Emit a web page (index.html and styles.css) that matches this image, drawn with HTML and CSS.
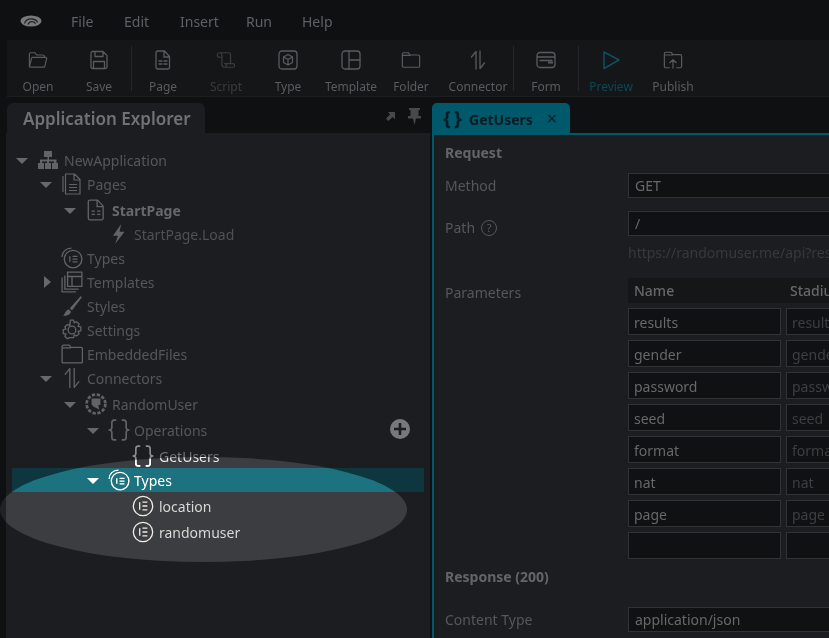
FILE: index.html
```html
<!DOCTYPE html>
<html lang="en">
<head>
<meta charset="utf-8">
<title>Application Explorer</title>
<link rel="stylesheet" href="styles.css">
</head>
<body>
<div class="app">
  <header class="menubar">
    <svg class="logo" width="22" height="12" viewBox="0 0 22 12"><ellipse cx="11" cy="6" rx="10.500" ry="5.500" fill="#77797b"/><path d="M4.500 8.500c1-3 4-4.800 7.500-4.500 3 .3 5 1.700 5.500 3.500M8 9.500c.8-2 2.500-3 4.500-2.800 1.500.2 2.500 1 3 2" fill="none" stroke="#232527" stroke-width="1.300"/></svg>
    <nav class="menu"><span>File</span><span>Edit</span><span>Insert</span><span>Run</span><span>Help</span></nav>
  </header>
  <div class="toolbar">
    <div class="tool t-open"><svg viewBox="0 0 22 20"><path d="M1.500 17V3.500a1.500 1.500 0 0 1 1.500-1.500h4.500l2 2.500h7a1.500 1.500 0 0 1 1.500 1.500v1M1.500 17.500l2.500-9.500a1 1 0 0 1 1-.8h14.500a1 1 0 0 1 1 1.300L18.500 17a1 1 0 0 1-1 .8H2.500"/></svg><span>Open</span></div>
    <div class="tool t-save"><svg viewBox="0 0 20 20"><path d="M3 1.500h11l4 4V17a1.500 1.500 0 0 1-1.500 1.500h-13A1.500 1.500 0 0 1 2 17V3a1.500 1.500 0 0 1 1-1.500zM6 1.500V6.500h8V1.500M4.500 18.500V11.500h11v7"/></svg><span>Save</span></div>
    <i class="sep sep1"></i>
    <div class="tool t-page"><svg viewBox="0 0 20 20"><path d="M4.500 1h7l5 5.500V17.500a1.500 1.500 0 0 1-1.500 1.500H4.500A1.500 1.500 0 0 1 3 17.500v-15A1.500 1.500 0 0 1 4.500 1zM11 1v6h5.500M6 11h3M11 11h3M6 14h3M11 14h3"/></svg><span>Page</span></div>
    <div class="tool t-script dim"><svg viewBox="0 0 22 20"><path d="M4 2h10a2 2 0 0 1 2 2v10M4 2a2.500 2.500 0 0 0-2.500 2.500C1.500 6 2.500 7 4 7h2M4 2a2.500 2.500 0 0 1 2.500 2.500V15a3 3 0 0 0 3 3h9a2 2 0 0 0 0-4H9.500a2 2 0 0 1 0 4"/></svg><span>Script</span></div>
    <div class="tool t-type"><svg viewBox="0 0 20 20"><rect x="1" y="1" width="18" height="18" rx="3"/><path d="M10 4.500l4.500 2.500v5.500L10 15l-4.500-2.500V7zM5.500 7L10 9.500 14.500 7M10 9.500V15"/></svg><span>Type</span></div>
    <div class="tool t-template"><svg viewBox="0 0 20 20"><rect x="1" y="1" width="18" height="18" rx="3"/><path d="M8 1v18M8 10h11"/></svg><span>Template</span></div>
    <div class="tool t-folder"><svg viewBox="0 0 22 20"><path d="M1.500 16.500v-13A1.500 1.500 0 0 1 3 2h5l2 2.500h9A1.500 1.500 0 0 1 20.500 6v10.500A1.500 1.500 0 0 1 19 18H3a1.500 1.500 0 0 1-1.500-1.500zM1.500 5h8.500"/></svg><span>Folder</span></div>
    <div class="tool t-connector"><svg viewBox="0 0 20 20"><path d="M8 19V1.500L3.500 7M12 1v17.500L16.500 13"/></svg><span>Connector</span></div>
    <i class="sep sep2"></i>
    <div class="tool t-form"><svg viewBox="0 0 20 20"><rect x="1" y="2.500" width="18" height="15" rx="3"/><path d="M1.500 7h17M4 10.500h12"/><rect class="solid" x="12" y="11.500" width="5" height="2"/></svg><span>Form</span></div>
    <i class="sep sep3"></i>
    <div class="tool t-preview accent"><svg viewBox="0 0 20 20"><path d="M3 2l15 8-15 8.500z"/></svg><span>Preview</span></div>
    <div class="tool t-publish"><svg viewBox="0 0 22 20"><path d="M7 18.500H3A1.500 1.500 0 0 1 1.500 17V3A1.500 1.500 0 0 1 3 1.500h6l2 2.500h8A1.500 1.500 0 0 1 20.500 5.500V17a1.500 1.500 0 0 1-1.500 1.500h-4M1.500 4.500h9M11 19V10M7.500 13L11 9.500l3.500 3.500"/></svg><span>Publish</span></div>
  </div>
  <div class="workspace">
    <aside class="explorer">
      <div class="panel-head">
        <div class="panel-tab">Application Explorer</div>
        <div class="panel-tools">
          <svg width="9" height="9" viewBox="0 0 10 10"><path d="M2 0h8v8L7.500 5.500 2.500 10 0 7.500l4.500-5z" fill="#48494b"/></svg>
          <svg width="13" height="17" viewBox="0 0 13 17"><path d="M1 0h11v2h-1.500v6H13v2.500H8L6.500 17 5 10.500H0V8h2.500V2H1z" fill="#47494b"/></svg>
        </div>
      </div>
      <div class="tree">
        <div class="row l0"><i class="arrow"></i><svg class="ic" viewBox="0 0 22 20"><path class="fill" d="M7 1h8v6h-3v2.500h7.500V13H21v6h-6v-6h2V11.500h-5V13h2v6H8v-6h2v-1.500H5V13h2v6H1v-6h2V9.500h7.500V7H7z"/></svg><span>NewApplication</span></div>
        <div class="row l1"><i class="arrow"></i><svg class="ic" viewBox="0 0 20 22"><path d="M3.500 20.500V1.500M1 19V3M3.500 1h9l5.500 5.500v14.500H3.500zM12 1v6h6M7 11.500h8M7 14.500h8M7 17.500h8"/></svg><span>Pages</span></div>
        <div class="row l2 gap start"><i class="arrow"></i><svg class="ic" viewBox="0 0 20 20"><path d="M4.500 1h7l5 5.500V17.500a1.500 1.500 0 0 1-1.500 1.500H4.500A1.500 1.500 0 0 1 3 17.500v-15A1.500 1.500 0 0 1 4.500 1zM11 1v6h5.500M6 11h3M11 11h3M6 14h3M11 14h3"/></svg><span>StartPage</span></div>
        <div class="row l3 load"><i class="noarrow"></i><svg class="ic" viewBox="0 0 20 20"><path class="fill" d="M12 1L4.500 11.500H9L6.500 19 15 8h-4.500z"/></svg><span>StartPage.Load</span></div>
        <div class="row l1"><i class="noarrow"></i><svg class="ic" viewBox="0 0 20 20"><path d="M1 9C1 4.500 4.500 1 9.500 1"/><circle cx="11" cy="11" r="8"/><path d="M8 8.500v5M10.500 8.500h4.500M10.500 11h4.500M10.500 13.500h4.500"/></svg><span>Types</span></div>
        <div class="row l1"><i class="arrow closed"></i><svg class="ic" viewBox="0 0 20 20"><path d="M1 6v13h12.500M3.500 4v12.500H16"/><rect x="6" y="1" width="13" height="13"/><path d="M6 5h13M10 5v9"/></svg><span>Templates</span></div>
        <div class="row l1"><i class="noarrow"></i><svg class="ic" viewBox="0 0 20 20"><path class="fill" d="M18 1l1 1-9 12-2-2zM7 13l2 2c0 2-2 4-7 4 1.500-1.500 1.500-4.500 5-6z"/></svg><span>Styles</span></div>
        <div class="row l1"><i class="noarrow"></i><svg class="ic" viewBox="0 0 20 20"><circle cx="10" cy="10" r="3.500"/><path d="M8.500 1h3l.5 2.500 2-1 2.500 2-1 2.200 2.500.5v3.500l-2.500.5 1 2.200-2.500 2-2-1-.5 2.600h-3L8 16.900l-2 1-2.500-2 1-2.200-2.500-.5V9.700l2.500-.5-1-2.200 2.500-2 2 1z"/></svg><span>Settings</span></div>
        <div class="row l1"><i class="noarrow"></i><svg class="ic" viewBox="0 0 20 20"><path d="M1 17V3.500A1.500 1.500 0 0 1 2.500 2h5l1.500 2h9A1.500 1.500 0 0 1 19.500 5.500V17a1 1 0 0 1-1 1H2a1 1 0 0 1-1-1zM1 4.500h8"/></svg><span>EmbeddedFiles</span></div>
        <div class="row l1"><i class="arrow"></i><svg class="ic" viewBox="0 0 20 20"><path d="M8 19V1.500L3.500 7M12 1v17.500L16.500 13"/></svg><span>Connectors</span></div>
        <div class="row l2 gap"><i class="arrow"></i><svg class="ic" viewBox="0 0 20 20"><circle cx="10" cy="10" r="8.500" stroke-dasharray="3 1.500" stroke-width="2.500"/><path class="fill" d="M6 5h8v6h-2l1 4-6-3V11H6z"/></svg><span>RandomUser</span></div>
        <div class="row l3 gap"><i class="arrow"></i><svg class="ic thick" viewBox="0 0 20 20"><path d="M7 1H5.500C4 1 3.500 2 3.500 3.500v4C3.500 9 2.500 10 1 10c1.500 0 2.500 1 2.500 2.500v4c0 1.500.5 2.500 2 2.500H7M13 1h1.500C16 1 16.500 2 16.500 3.500v4c0 1.500 1 2.500 2.500 2.500-1.500 0-2.500 1-2.500 2.500v4c0 1.500-.5 2.500-2 2.500H13"/></svg><span>Operations</span></div>
        <div class="row l4 gap light"><i class="noarrow"></i><svg class="ic thick" viewBox="0 0 20 20"><path d="M7 1H5.500C4 1 3.500 2 3.500 3.500v4C3.500 9 2.500 10 1 10c1.500 0 2.500 1 2.500 2.500v4c0 1.500.5 2.500 2 2.500H7M13 1h1.500C16 1 16.500 2 16.500 3.500v4c0 1.500 1 2.500 2.500 2.500-1.500 0-2.500 1-2.500 2.500v4c0 1.500-.5 2.500-2 2.500H13"/></svg><span>GetUsers</span></div>
        <div class="row l3 selected"><i class="arrow"></i><svg class="ic" viewBox="0 0 20 20"><path d="M1 9C1 4.500 4.500 1 9.500 1"/><circle cx="11" cy="11" r="8"/><path d="M8 8.500v5M10.500 8.500h4.500M10.500 11h4.500M10.500 13.500h4.500"/></svg><span>Types</span></div>
        <div class="row l4 gap leaf"><i class="noarrow"></i><svg class="ic" viewBox="0 0 20 20"><circle cx="10" cy="10" r="8.800"/><path d="M7 6.500v7M9.500 6.500h4.500M9.500 10h4.500M9.500 13.500h4.500"/></svg><span>location</span></div>
        <div class="row l4 gap leaf"><i class="noarrow"></i><svg class="ic" viewBox="0 0 20 20"><circle cx="10" cy="10" r="8.800"/><path d="M7 6.500v7M9.500 6.500h4.500M9.500 10h4.500M9.500 13.500h4.500"/></svg><span>randomuser</span></div>
      </div>
      <svg class="plus" width="20" height="20" viewBox="0 0 20 20"><circle cx="10" cy="10" r="10" fill="#77797b"/><path d="M10 4v12M4 10h12" stroke="#1c1d20" stroke-width="2.600"/></svg>
      <div class="highlight"></div>
    </aside>
    <main class="editor">
      <div class="tabs">
        <div class="tab"><b class="brace">{ }</b><b>GetUsers</b><span class="x">×</span></div>
      </div>
      <div class="doc">
        <h2 class="h-request">Request</h2>
        <div class="frow r-method"><label>Method</label><div class="input wide">GET</div></div>
        <div class="frow r-path"><label class="path-label">Path <em>?</em></label><div class="input wide">/</div></div>
        <div class="url">https://randomuser.me/api?results</div>
        <div class="frow r-params">
          <label>Parameters</label>
          <div class="grid">
            <div class="ghead"><span>Name</span><span>Stadium</span></div>
            <div class="cell">results</div><div class="cell ph">results</div>
            <div class="cell">gender</div><div class="cell ph">gender</div>
            <div class="cell">password</div><div class="cell ph">password</div>
            <div class="cell">seed</div><div class="cell ph">seed</div>
            <div class="cell">format</div><div class="cell ph">format</div>
            <div class="cell">nat</div><div class="cell ph">nat</div>
            <div class="cell">page</div><div class="cell ph">page</div>
            <div class="cell"></div><div class="cell ph"></div>
          </div>
        </div>
        <h2 class="h-response">Response (200)</h2>
        <div class="frow r-ctype"><label>Content Type</label><div class="input wide">application/json</div></div>
      </div>
    </main>
  </div>
</div>
</body>
</html>
```
FILE: styles.css
```css
* { box-sizing: border-box; }
html, body { margin: 0; height: 100%; background: #0f1012; overflow: hidden; }
body { font-family: "Noto Sans", "Open Sans", sans-serif; font-size: 14px; color: #66686a; }
.app { position: relative; width: 829px; height: 638px; display: flex; flex-direction: column; overflow: hidden; }

.menubar { height: 40px; flex: none; display: flex; align-items: center; padding: 2px 0 0 20px; background: #0f1012; }
.logo { flex: none; }
.menu { display: flex; margin-left: 29px; font-size: 14px; color: #5d6065; }
.menu span:nth-child(1) { width: 53px; }
.menu span:nth-child(2) { width: 56px; }
.menu span:nth-child(3) { width: 66px; }
.menu span:nth-child(4) { width: 56px; }

.toolbar { height: 57px; flex: none; margin-left: 7px; display: flex; background: #141618; border-bottom: 1px solid #1c1e20; }
.tool { flex: none; display: flex; flex-direction: column; align-items: center; padding-top: 10px; font-size: 12px; line-height: 17px; color: #5a5c5e; height: 56px; }
.tool svg { width: 20px; height: 20px; margin-bottom: 8px; fill: none; stroke: #595b5d; stroke-width: 1.300; stroke-linejoin: round; stroke-linecap: round; }
.tool svg .solid { fill: #595b5d; stroke: none; }
.tool.dim { color: #3a3c3e; }
.tool.dim svg { stroke: #3a3c3e; }
.tool.accent { color: #0c4857; }
.tool.accent svg { stroke: #0b5062; stroke-width: 1.500; }
.t-open { width: 62px; }
.t-save { width: 60px; }
.t-page { width: 62px; }
.t-script { width: 64px; }
.t-type { width: 60px; }
.t-template { width: 66px; }
.t-folder { width: 54px; }
.t-connector { width: 75px; padding-left: 5px; }
.t-form { width: 64px; }
.t-preview { width: 64px; }
.t-publish { width: 60px; }
.sep { flex: none; width: 1px; height: 45px; margin-top: 6px; background: #25272a; }
.sep1 { margin-left: 2px; }

.workspace { flex: 1; min-height: 0; display: flex; margin-left: 6px; }

.explorer { position: relative; width: 424px; flex: none; background: #1c1d20; }
.panel-head { height: 36px; padding: 6px 9px 0 1px; display: flex; justify-content: space-between; background: #0f1012; }
.panel-tab { width: 198px; height: 30px; padding: 0 0 0 16px; display: flex; align-items: center; border-radius: 6px 6px 0 0; background: #1c1d20; font-size: 17px; font-weight: 600; color: #707274; }
.panel-tools { display: flex; align-items: center; gap: 13px; margin-top: -3px; }

.tree { padding-top: 15px; margin: 0 6px; }
.row { display: flex; align-items: center; height: 24px; font-size: 14px; color: #55575a; white-space: nowrap; }
.row.gap { margin-top: 2px; }
.row .ic { flex: none; width: 22px; height: 22px; fill: none; stroke: #616365; stroke-width: 1.200; stroke-linejoin: round; }
.row .ic.thick { stroke-width: 1.500; stroke-linecap: round; }
.row .ic .fill { fill: #616365; stroke: none; }
.row span { margin-left: 4px; }
.arrow { flex: none; width: 0; height: 0; margin: 1px 9px 0 0; border-style: solid; border-width: 6px 6px 0; border-color: #66686a transparent transparent; }
.arrow.closed { margin: 0 10px 0 4px; border-width: 6px 0 6px 7px; border-color: transparent transparent transparent #66686a; }
.noarrow { flex: none; width: 21px; }
.l0 { padding-left: 4px; }
.l0 span { margin-left: 5px; }
.l1 { padding-left: 28px; }
.l2 { padding-left: 52px; }
.l2 span { margin-left: 5px; }
.l3 { padding-left: 75px; }
.l4 { padding-left: 99px; }
.l4 span { margin-left: 5px; }
.start span { font-weight: 700; color: #66686a; }
.load span { color: #4f5154; }
.light { color: #6e7072; }
.light .ic { stroke: #8a8c8e; }
.selected { color: #7f8082; background: #0d363e; }
.selected .arrow { border-top-color: #808080; }
.selected .ic { stroke: #808080; }
.leaf { color: #66686a; }
.leaf .ic { stroke: #707070; }
.plus { position: absolute; right: 20px; top: 322px; }
.highlight { position: absolute; left: -6px; top: 360px; width: 407px; height: 105px; border-radius: 50%; background: rgb(136, 134, 130); mix-blend-mode: color-dodge; pointer-events: none; }

.editor { flex: 1; min-width: 0; margin-left: 2px; display: flex; flex-direction: column; }
.tabs { height: 38px; flex: none; padding: 6px 0 0 0; background: #0f1012; border-bottom: 2px solid #00596a; }
.tab { width: 138px; height: 30px; display: flex; align-items: center; padding: 2px 0 0 11px; border-radius: 5px 5px 0 0; background: #00596a; color: #0d1c24; font-size: 14px; }
.tab b { font-weight: 700; }
.tab .brace { width: 20px; font-size: 20px; line-height: 20px; margin: -3px 6px 0 0; letter-spacing: -1px; white-space: nowrap; }
.tab .x { margin-left: 14px; font-size: 18px; line-height: 1; margin-top: -3px; }

.doc { flex: 1; min-height: 0; border-left: 2px solid #00596a; padding: 8px 0 0 11px; background: #1c1d20; overflow: hidden; }
h2 { margin: 0; font-size: 14px; font-weight: 700; color: #636567; line-height: 20px; }
.frow { display: flex; align-items: flex-start; }
.frow label { width: 183px; flex: none; color: #55575a; line-height: 25px; }
.path-label { display: flex; align-items: center; gap: 6px; padding-top: 4px; }
.frow em { flex: none; width: 16px; height: 16px; border: 1px solid #55575a; border-radius: 50%; font-size: 11px; line-height: 14px; font-style: normal; text-align: center; }
.input { flex: none; width: 300px; height: 25px; padding: 0 6px; border: 1px solid #303234; background: #101113; color: #66686a; line-height: 23px; }
.r-method { margin-top: 10px; }
.r-path { margin-top: 13px; }
.url { margin: 3px 0 0 183px; color: #37393c; line-height: 20px; white-space: nowrap; }
.r-params { margin-top: 15px; }
.r-params label { padding-top: 2px; }
.grid { display: grid; grid-template-columns: 153px 153px; gap: 5px; }
.ghead { grid-column: 1 / -1; display: flex; height: 25px; background: #151618; color: #66686a; line-height: 25px; padding-left: 6px; font-weight: 500; }
.ghead span { flex: none; width: 156px; }
.cell { height: 27px; padding: 0 5px; border: 1px solid #303234; background: #101113; color: #66686a; line-height: 27px; overflow: hidden; white-space: nowrap; }
.cell.ph { color: #3d3f42; }
.h-response { margin-top: 8px; }
.r-ctype { margin-top: 20px; }
```
